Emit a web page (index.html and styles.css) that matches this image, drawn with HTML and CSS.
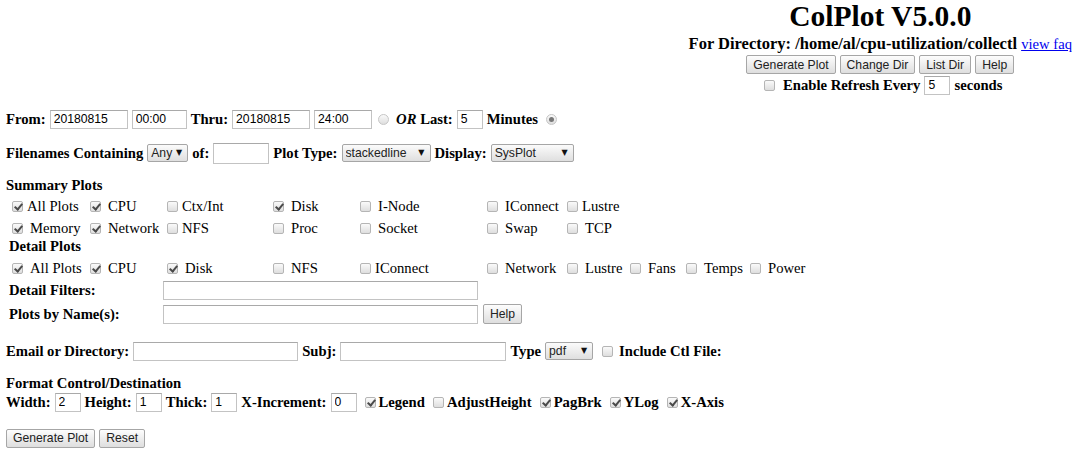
FILE: index.html
```html
<!DOCTYPE html>
<html lang="en">
<head>
    <meta charset="UTF-8">
    <title>ColPlot V5.0.0</title>
    <link rel="stylesheet" href="styles.css">
</head>
<body>
    <div class="header">
        <div class="header-box">
            <h1>ColPlot V5.0.0</h1>
            <div class="dir">For Directory: /home/al/cpu-utilization/collectl <a href="#" class="faq">view faq</a></div>
            <div class="hbtns">
                <button type="button">Generate Plot</button>
                <button type="button">Change Dir</button>
                <button type="button">List Dir</button>
                <button type="button">Help</button>
            </div>
            <div class="refresh">
                <input type="checkbox" class="cb-refresh">
                <b>Enable Refresh Every</b>
                <input type="text" class="w26" value="5">
                <b>seconds</b>
            </div>
        </div>
    </div>

    <form class="main">
        <div class="row r-from">
            <b>From:</b>
            <input type="text" class="w78" value="20180815">
            <input type="text" class="w55" value="00:00">
            <b>Thru:</b>
            <input type="text" class="w78" value="20180815">
            <input type="text" class="w58" value="24:00">
            <input type="radio" name="range" class="rad">
            <b class="or"><i>OR</i> Last:</b>
            <input type="text" class="w26" value="5">
            <b>Minutes</b>
            <input type="radio" name="range" class="rad rad2" checked>
        </div>

        <div class="row r-files">
            <b>Filenames Containing</b>
            <span class="sel w41"><select><option>Any</option></select></span>
            <b>of:</b>
            <input type="text" class="w56 tall">
            <b>Plot Type:</b>
            <span class="sel w89"><select><option>stackedline</option></select></span>
            <b>Display:</b>
            <span class="sel w83"><select><option>SysPlot</option></select></span>
        </div>

        <div class="heading h-summary"><b>Summary Plots</b></div>
        <div class="plots summary">
            <label class="ck t"><input type="checkbox" checked><span>All Plots</span></label>
            <label class="ck"><input type="checkbox" checked><span>CPU</span></label>
            <label class="ck t"><input type="checkbox"><span>Ctx/Int</span></label>
            <label class="ck"><input type="checkbox" checked><span>Disk</span></label>
            <label class="ck"><input type="checkbox"><span>I-Node</span></label>
            <label class="ck"><input type="checkbox"><span>IConnect</span></label>
            <label class="ck t"><input type="checkbox"><span>Lustre</span></label>

            <label class="ck"><input type="checkbox" checked><span>Memory</span></label>
            <label class="ck"><input type="checkbox" checked><span>Network</span></label>
            <label class="ck t"><input type="checkbox"><span>NFS</span></label>
            <label class="ck"><input type="checkbox"><span>Proc</span></label>
            <label class="ck"><input type="checkbox"><span>Socket</span></label>
            <label class="ck"><input type="checkbox"><span>Swap</span></label>
            <label class="ck"><input type="checkbox"><span>TCP</span></label>
        </div>

        <div class="heading h-detail"><b>Detail Plots</b></div>
        <div class="plots detail">
            <label class="ck"><input type="checkbox" checked><span>All Plots</span></label>
            <label class="ck"><input type="checkbox" checked><span>CPU</span></label>
            <label class="ck"><input type="checkbox" checked><span>Disk</span></label>
            <label class="ck"><input type="checkbox"><span>NFS</span></label>
            <label class="ck t"><input type="checkbox"><span>IConnect</span></label>
            <label class="ck"><input type="checkbox"><span>Network</span></label>
            <label class="ck"><input type="checkbox"><span>Lustre</span></label>
            <label class="ck"><input type="checkbox"><span>Fans</span></label>
            <label class="ck"><input type="checkbox"><span>Temps</span></label>
            <label class="ck"><input type="checkbox"><span>Power</span></label>
        </div>

        <div class="row field r-filters">
            <b class="flabel">Detail Filters:</b>
            <input type="text" class="w315">
        </div>
        <div class="row field r-names">
            <b class="flabel">Plots by Name(s):</b>
            <input type="text" class="w315">
            <button type="button" class="btn-help">Help</button>
        </div>

        <div class="row r-email">
            <b>Email or Directory:</b>
            <input type="text" class="w165">
            <b>Subj:</b>
            <input type="text" class="w166">
            <b>Type</b>
            <span class="sel w48"><select><option>pdf</option></select></span>
            <input type="checkbox" class="cb-ctl">
            <b>Include Ctl File:</b>
        </div>

        <div class="heading h-format"><b>Format Control/Destination</b></div>
        <div class="row r-format">
            <b>Width:</b>
            <input type="text" class="w26" value="2">
            <b>Height:</b>
            <input type="text" class="w26" value="1">
            <b>Thick:</b>
            <input type="text" class="w26" value="1">
            <b>X-Increment:</b>
            <input type="text" class="w26" value="0">
            <input type="checkbox" class="cb-fmt" checked>
            <b>Legend</b>
            <input type="checkbox" class="cb-fmt">
            <b>AdjustHeight</b>
            <input type="checkbox" class="cb-fmt" checked>
            <b>PagBrk</b>
            <input type="checkbox" class="cb-fmt" checked>
            <b>YLog</b>
            <input type="checkbox" class="cb-fmt" checked>
            <b>X-Axis</b>
        </div>

        <div class="row r-submit">
            <button type="button">Generate Plot</button>
            <button type="button">Reset</button>
        </div>
    </form>
</body>
</html>
```

FILE: styles.css
```css
body {
    margin: 0 8px 0 6px;
    font-family: "Liberation Serif", "Times New Roman", serif;
    font-size: 14.67px;
    color: #000;
    background: #fff;
}
b {
    font-weight: bold;
    white-space: nowrap;
}

/* header, right side */
.header {
    display: flex;
    justify-content: flex-end;
}
.header-box {
    text-align: center;
}
h1 {
    margin: 0;
    font-size: 29.5px;
    line-height: 33px;
}
.dir {
    margin-top: 1px;
    height: 19px;
    line-height: 19px;
    font-weight: bold;
    font-size: 16.5px;
    white-space: nowrap;
}
.faq {
    font-weight: normal;
    font-size: 14.67px;
    color: #0000ee;
}
.hbtns {
    margin-top: 2px;
    display: flex;
    justify-content: center;
    gap: 4px;
}
.refresh {
    display: flex;
    justify-content: center;
    align-items: center;
    gap: 4px;
    height: 20px;
    margin-top: 1px;
    padding-left: 6px;
}
.cb-refresh {
    margin-right: 4px !important;
}

/* form controls */
input[type="text"] {
    box-sizing: border-box;
    height: 19px;
    margin: 0;
    padding: 0 3px;
    border: 1px solid #c3c3c3;
    border-top-color: #a9a9a9;
    font-family: "Liberation Sans", Arial, sans-serif;
    font-size: 12.2px;
    color: #000;
    background: #fff;
    outline: none;
}
input.tall {
    height: 21px;
}
.w26 { width: 26px; }
.w55 { width: 55px; }
.w56 { width: 56px; }
.w58 { width: 58px; }
.w78 { width: 78px; }
.w165 { width: 165px; }
.w166 { width: 166px; }
.w315 { width: 315px; }

button {
    box-sizing: border-box;
    height: 19px;
    margin: 0;
    padding: 0 6px;
    border: 1px solid #a6a6a6;
    border-radius: 2px;
    background: linear-gradient(#fdfdfd, #dedede);
    font-family: "Liberation Sans", Arial, sans-serif;
    font-size: 12.2px;
    color: #222;
}

.sel {
    position: relative;
    display: inline-block;
    height: 18px;
}
.sel select {
    -webkit-appearance: none;
    appearance: none;
    box-sizing: border-box;
    width: 100%;
    height: 18px;
    margin: 0;
    padding: 0 0 0 3px;
    border: 1px solid #a6a6a6;
    border-radius: 2px;
    background: linear-gradient(#fbfbfb, #dfdfdf);
    font-family: "Liberation Sans", Arial, sans-serif;
    font-size: 12.2px;
    color: #222;
}
.sel::after {
    content: "\25BC";
    position: absolute;
    right: 6px;
    top: 4px;
    font-family: "DejaVu Sans", sans-serif;
    font-size: 8px;
    line-height: 10px;
    color: #111;
    pointer-events: none;
}
.w41 { width: 41px; }
.w48 { width: 48px; }
.w83 { width: 83px; }
.w89 { width: 89px; }

input[type="checkbox"],
input[type="radio"] {
    -webkit-appearance: none;
    appearance: none;
    position: relative;
    box-sizing: border-box;
    width: 11px;
    height: 11px;
    margin: 0;
    border: 1px solid #b5b5b5;
    border-radius: 2px;
    background: linear-gradient(#fafafa, #dedede);
    flex: none;
}
input[type="checkbox"]:checked::after {
    content: "";
    position: absolute;
    left: 3px;
    top: 0px;
    width: 3px;
    height: 6px;
    border: solid #4a4a4a;
    border-width: 0 2px 2px 0;
    transform: rotate(40deg);
}
input[type="radio"] {
    border-radius: 50%;
    border-color: #c6c6c6;
}
input[type="radio"]:checked::after {
    content: "";
    position: absolute;
    left: 2px;
    top: 2px;
    width: 5px;
    height: 5px;
    border-radius: 50%;
    background: #777;
}

/* rows */
.row {
    display: flex;
    align-items: center;
    gap: 4px;
    height: 20px;
}
.r-from {
    margin-top: 14px;
}
.rad {
    margin: 0 3px 0 2px !important;
}
.rad2 {
    margin-left: 4px !important;
}
.r-files {
    margin-top: 14px;
}
.heading {
    height: 18px;
    line-height: 18px;
}
.h-summary {
    margin-top: 13px;
}
.h-detail {
    height: 16px;
    line-height: 16px;
    padding-left: 3px;
}

.plots {
    display: grid;
    grid-auto-rows: 20px;
    row-gap: 2px;
    margin-left: 6px;
}
.summary {
    margin-top: 2px;
    grid-template-columns: 78px 77px 106px 87px 127px 80px auto;
}
.detail {
    margin-top: 4px;
    grid-template-columns: 78px 77px 106px 87px 127px 80px 63px 56px 64px auto;
}
.ck {
    display: flex;
    align-items: center;
    white-space: nowrap;
}
.ck span {
    margin-left: 7px;
}
.ck.t span {
    margin-left: 4px;
}

.field {
    padding-left: 3px;
}
.flabel {
    width: 150px;
}
.r-filters {
    margin-top: 2px;
}
.r-names {
    margin-top: 4px;
}
.btn-help {
    height: 20px;
    margin-left: 1px;
}
.r-email {
    margin-top: 17px;
}
.cb-ctl {
    margin: 0 2px 0 5px !important;
}
.h-format {
    margin-top: 13px;
}
.r-format {
    margin-top: 0;
}
.cb-fmt {
    margin: 0 -1px 0 4px !important;
}
.r-submit {
    margin-top: 16px;
}
```
